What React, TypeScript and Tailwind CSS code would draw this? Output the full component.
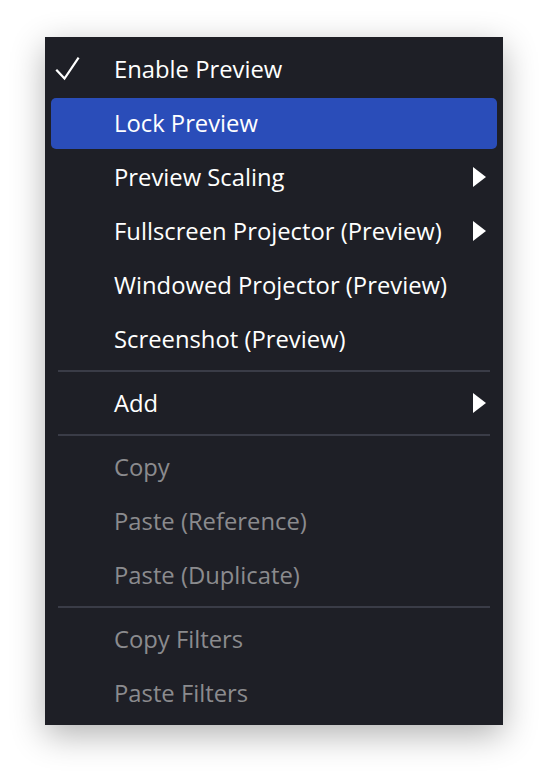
import { ReactNode } from 'react';

type Item =
  | { kind: 'item'; label: string; checked?: boolean; active?: boolean; submenu?: boolean; disabled?: boolean }
  | { kind: 'sep' };

const ITEMS: Item[] = [
  { kind: 'item', label: 'Enable Preview', checked: true },
  { kind: 'item', label: 'Lock Preview', active: true },
  { kind: 'item', label: 'Preview Scaling', submenu: true },
  { kind: 'item', label: 'Fullscreen Projector (Preview)', submenu: true },
  { kind: 'item', label: 'Windowed Projector (Preview)' },
  { kind: 'item', label: 'Screenshot (Preview)' },
  { kind: 'sep' },
  { kind: 'item', label: 'Add', submenu: true },
  { kind: 'sep' },
  { kind: 'item', label: 'Copy', disabled: true },
  { kind: 'item', label: 'Paste (Reference)', disabled: true },
  { kind: 'item', label: 'Paste (Duplicate)', disabled: true },
  { kind: 'sep' },
  { kind: 'item', label: 'Copy Filters', disabled: true },
  { kind: 'item', label: 'Paste Filters', disabled: true },
];

function Check() {
  return (
    <svg width="26" height="26" viewBox="0 0 26 26" className="text-white" fill="none">
      <path d="M2 14.5 L9.5 22.5 L23 2.5" stroke="currentColor" strokeWidth="2.2" strokeLinecap="square" strokeLinejoin="miter" />
    </svg>
  );
}

function Arrow() {
  return (
    <svg width="13" height="20" viewBox="0 0 13 20" className="text-white">
      <path d="M0 0 L13 10 L0 20 Z" fill="currentColor" />
    </svg>
  );
}

function Row({ children, active }: { children: ReactNode; active?: boolean }) {
  return (
    <div className="h-[54px] px-[6px] py-[1.5px]">
      <div className={`relative h-full flex items-center rounded-[5px] ${active ? 'bg-[#2a4db9]' : ''}`}>{children}</div>
    </div>
  );
}

export default function App() {
  return (
    <div className="min-h-screen bg-white pt-[37px] pl-[45px]" style={{ fontFamily: '"Open Sans", "Noto Sans", sans-serif' }}>
      <div className="w-[458px] h-[688px] bg-[#1e1f26] py-[5px] shadow-[0_10px_32px_rgba(0,0,0,0.3)]">
        {ITEMS.map((it, i) => {
          if (it.kind === 'sep') {
            return (
              <div key={i} className="h-[10px] flex items-center px-[13px]">
                <div className="h-[2px] w-full bg-[#3a3c47]" />
              </div>
            );
          }
          return (
            <Row key={i} active={it.active}>
              {it.checked && (
                <div className="absolute left-[4px] top-1/2 -translate-y-1/2">
                  <Check />
                </div>
              )}
              <span className={`pl-[63px] pt-[2px] text-[23.8px] leading-none ${it.disabled ? 'text-[#8b8b8e]' : 'text-white'}`}>{it.label}</span>
              {it.submenu && (
                <div className="absolute right-[11px] top-1/2 -translate-y-1/2 flex">
                  <Arrow />
                </div>
              )}
            </Row>
          );
        })}
      </div>
    </div>
  );
}
